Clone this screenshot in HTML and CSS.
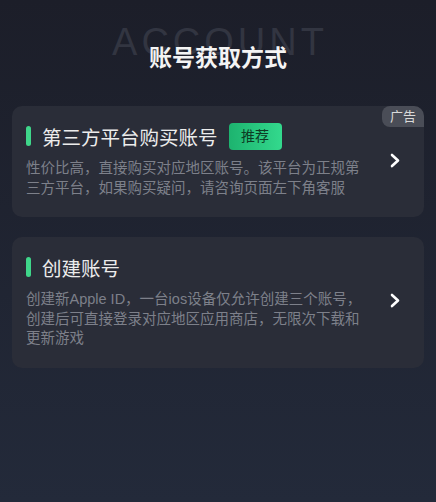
FILE: index.html
```html
<!DOCTYPE html>
<html lang="zh-CN">

<head>
    <meta charset="UTF-8">
    <title>账号获取方式</title>
    <link rel="stylesheet" href="styles.css">
</head>

<body>
    <header class="page-header">
        <span class="header-bg">ACCOUNT</span>
        <h2>账号获取方式</h2>
    </header>

    <div class="option-list">
        <div class="option-card">
            <span class="ad-tag">广告</span>
            <div class="option-body">
                <div class="option-title">
                    <span class="title-bar"></span>
                    <span>第三方平台购买账号</span>
                    <span class="badge">推荐</span>
                </div>
                <p class="option-desc">性价比高，直接购买对应地区账号。该平台为正规第三方平台，如果购买疑问，请咨询页面左下角客服</p>
            </div>
            <svg class="chevron" width="10" height="15" viewBox="0 0 10 15">
                <polyline points="2,2 8,7.5 2,13" fill="none" stroke="#fff" stroke-width="2.6" stroke-linecap="round" stroke-linejoin="round" />
            </svg>
        </div>

        <div class="option-card">
            <div class="option-body">
                <div class="option-title">
                    <span class="title-bar"></span>
                    <span>创建账号</span>
                </div>
                <p class="option-desc">创建新Apple ID，一台ios设备仅允许创建三个账号，创建后可直接登录对应地区应用商店，无限次下载和更新游戏</p>
            </div>
            <svg class="chevron" width="10" height="15" viewBox="0 0 10 15">
                <polyline points="2,2 8,7.5 2,13" fill="none" stroke="#fff" stroke-width="2.6" stroke-linecap="round" stroke-linejoin="round" />
            </svg>
        </div>
    </div>
</body>

</html>
```

FILE: styles.css
```css
* {
    margin: 0;
    padding: 0;
    box-sizing: border-box;
    font-family: 'Liberation Sans', 'Noto Sans CJK SC', sans-serif;
}

body {
    min-height: 502px;
    padding: 0 12px;
    color: #fff;
    background: linear-gradient(180deg, #1c1e29, #232a3a);
}

.page-header {
    position: relative;
    height: 106px;
    padding-top: 42px;
    text-align: center;
}

.header-bg {
    position: absolute;
    top: 23px;
    left: 0;
    right: 0;
    font-size: 38px;
    line-height: 38px;
    letter-spacing: 4px;
    padding-left: 4px;
    color: #323541;
}

.page-header h2 {
    position: relative;
    font-size: 23px;
    line-height: 32px;
    font-weight: 600;
    color: #f4f4f4;
}

.option-list {
    display: flex;
    flex-direction: column;
    gap: 20px;
}

.option-card {
    position: relative;
    display: flex;
    align-items: center;
    padding: 16px 24px 19px 14px;
    background: #2a2d38;
    border-radius: 10px;
}

.ad-tag {
    position: absolute;
    top: 0;
    right: 0;
    width: 42px;
    height: 21px;
    line-height: 21px;
    text-align: center;
    font-size: 13px;
    color: #dadada;
    background: #4a4d57;
    border-radius: 8px 10px 0 8px;
}

.option-body {
    width: 340px;
}

.option-title {
    display: flex;
    align-items: center;
    height: 28px;
    font-size: 19.5px;
    color: #ececec;
}

.title-bar {
    width: 5px;
    height: 20px;
    margin-right: 11px;
    border-radius: 3px;
    background: #3fd68a;
}

.badge {
    width: 53px;
    height: 27px;
    line-height: 27px;
    margin-left: 11px;
    text-align: center;
    font-size: 14px;
    color: #0e3b24;
    border-radius: 4px;
    background: linear-gradient(90deg, #1db36f, #33d98d);
}

.option-desc {
    margin-top: 9px;
    font-size: 14.5px;
    line-height: 19.5px;
    color: #7d808a;
}

.chevron {
    margin-left: auto;
}
```
